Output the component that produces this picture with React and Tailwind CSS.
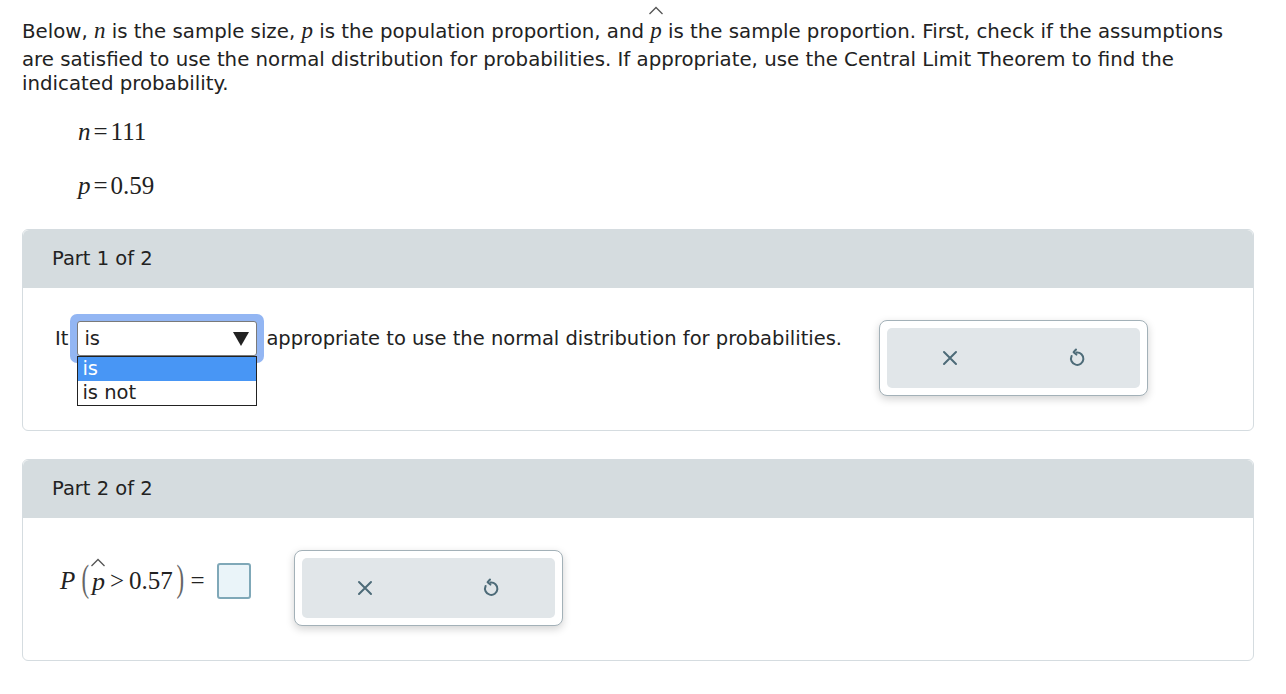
import React from "react";

const sans = { fontFamily: "Verdana, 'DejaVu Sans', sans-serif" };

const Hat = ({ children, top = "-top-[13px]", size = "text-[23px]" }) => (
  <span className="relative inline-block">
    <span className={`absolute left-1/2 -translate-x-1/2 ${top} text-[#555] leading-none`}>
      <svg width="15" height="9" viewBox="0 0 15 9" className="block">
        <path d="M1 8 L7.5 1.5 L14 8" fill="none" stroke="currentColor" strokeWidth="1.3" />
      </svg>
    </span>
    <i className={`font-['Liberation_Serif',serif] ${size}`}>{children}</i>
  </span>
);

const CloseIcon = () => (
  <svg width="20" height="20" viewBox="0 0 20 20">
    <path d="M4 4 L16 16 M16 4 L4 16" stroke="#4d6b78" strokeWidth="2" strokeLinecap="round" />
  </svg>
);

const UndoIcon = () => (
  <svg width="22" height="22" viewBox="0 0 22 22">
    <path
      d="M10.5 5.5 A6.2 6.2 0 1 1 5.6 9"
      fill="none"
      stroke="#4d6b78"
      strokeWidth="2"
      strokeLinecap="round"
    />
    <path d="M10 2.5 L7.6 5.2 L10.4 7.6" fill="none" stroke="#4d6b78" strokeWidth="2" strokeLinecap="round" strokeLinejoin="round" />
  </svg>
);

const ActionPanel = () => (
  <div className="w-[269px] h-[76px] shrink-0 rounded-lg border border-[#a3b1b8] bg-white p-[7px] shadow-[0_3px_8px_rgba(0,0,0,0.18)]">
    <div className="flex h-full rounded-[5px] bg-[#e1e6e9]">
      <button className="flex flex-1 items-center justify-center">
        <CloseIcon />
      </button>
      <button className="flex flex-1 items-center justify-center">
        <UndoIcon />
      </button>
    </div>
  </div>
);

const PartCard = ({ title, children }) => (
  <div className="rounded-md border border-[#d5dce0] overflow-visible">
    <div className="h-[58px] rounded-t-md bg-[#d5dcdf] flex items-center pl-[29px] text-[19.5px] text-[#222]">
      {title}
    </div>
    <div className="pt-[32px] pb-[34px]">{children}</div>
  </div>
);

export default function App() {
  return (
    <div className="min-h-screen bg-white pl-[22px] pr-[32px] text-[#222]" style={sans}>
      <p className="pt-[19px] text-[19.75px] leading-[24px] whitespace-nowrap">
        Below, <i className="font-['Liberation_Serif',serif] text-[23px]">n</i> is the sample size,{" "}
        <i className="font-['Liberation_Serif',serif] text-[23px]">p</i> is the population proportion, and{" "}
        <span className="inline-block pb-[4px]">
          <Hat>p</Hat>
        </span>{" "}
        is the sample proportion. First, check if the assumptions
        <br />
        are satisfied to use the normal distribution for probabilities. If appropriate, use the Central Limit
        Theorem to find the
        <br />
        indicated probability.
      </p>

      <div className="pl-[56px] pt-[9px] font-['Liberation_Serif',serif] text-[25px] text-[#222]">
        <div className="h-[54px] leading-[54px]">
          <i>n</i>
          <span className="mx-[3px]">=</span>111
        </div>
        <div className="h-[54px] leading-[54px]">
          <i>p</i>
          <span className="mx-[3px]">=</span>0.59
        </div>
      </div>

      <div className="mt-[16px]">
        <PartCard title="Part 1 of 2">
          <div className="flex items-start pl-[32px]">
            <div className="-mt-[6px] flex w-[824px] items-center text-[19.5px]">
              <span className="mr-[2px]">It</span>
              <div className="relative">
                <div className="rounded-[7px] bg-[#93b6f3] p-[7px]">
                  <div className="flex h-[35px] w-[180px] items-center justify-between rounded-[3px] border border-[#7a7a7a] bg-white pl-[6px] pr-[6px]">
                    <span>is</span>
                    <svg width="18" height="16" viewBox="0 0 18 16">
                      <path d="M1 1 H17 L9 15 Z" fill="#222" />
                    </svg>
                  </div>
                </div>
                <div className="absolute left-[7px] top-[42px] w-[180px] border border-[#222] bg-white leading-[24px]">
                  <div className="bg-[#4896f5] pl-[4px] text-white">is</div>
                  <div className="pl-[4px]">is not</div>
                </div>
              </div>
              <span className="ml-[2px]">appropriate to use the normal distribution for probabilities.</span>
            </div>
            <ActionPanel />
          </div>
        </PartCard>
      </div>

      <div className="mt-[28px]">
        <PartCard title="Part 2 of 2">
          <div className="flex items-center pl-[37px]">
            <div className="mb-[14px] flex items-center font-['Liberation_Serif',serif] text-[25px]">
              <i>P</i>
              <span className="relative -top-[3px] ml-[4px] text-[38px] leading-none font-light text-[#666] scale-x-[0.6]">(</span>
              <Hat top="-top-[4px]" size="text-[26px]">p</Hat>
              <span className="mx-[5px]">&gt;</span>
              <span>0.57</span>
              <span className="relative -top-[3px] ml-[1px] mr-[3px] text-[38px] leading-none font-light text-[#666] scale-x-[0.6]">)</span>
              <span className="mr-[12px] ml-[1px]">=</span>
              <div className="h-[36px] w-[34px] rounded-[3px] border-2 border-[#7fa8b8] bg-[#eaf4f9]" />
            </div>
            <div className="ml-[43px]">
              <ActionPanel />
            </div>
          </div>
        </PartCard>
      </div>
    </div>
  );
}
